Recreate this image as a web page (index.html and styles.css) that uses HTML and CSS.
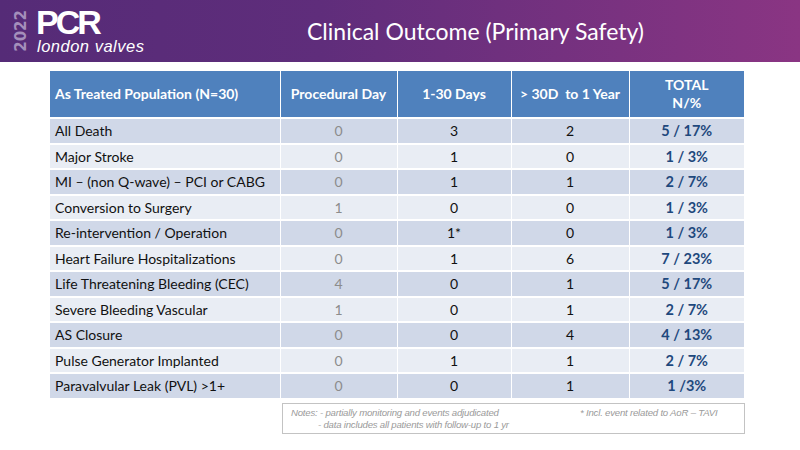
FILE: index.html
```html
<!DOCTYPE html>
<html>
<head>
<meta charset="utf-8">
<link rel="stylesheet" href="styles.css">
</head>
<body>
<header class="topbar">
  <div class="logo">
    <span class="year">2022</span>
    <div class="brand">
      <span class="pcr">PCR</span>
      <span class="lv">london valves</span>
    </div>
  </div>
  <h1 class="title">Clinical Outcome (Primary Safety)</h1>
</header>
<main class="content">
  <table class="outcomes">
    <colgroup>
      <col class="col-label">
      <col class="col-proc">
      <col class="col-30">
      <col class="col-year">
      <col class="col-total">
    </colgroup>
    <thead>
      <tr>
        <th class="c-label">As Treated Population (N=30)</th>
        <th>Procedural Day</th>
        <th>1-30 Days</th>
        <th>&gt; 30D&nbsp; to 1 Year</th>
        <th>TOTAL<br>N/%</th>
      </tr>
    </thead>
    <tbody>
      <tr><td class="c-label">All Death</td><td class="proc">0</td><td>3</td><td>2</td><td class="total">5 / 17%</td></tr>
      <tr><td class="c-label">Major Stroke</td><td class="proc">0</td><td>1</td><td>0</td><td class="total">1 / 3%</td></tr>
      <tr><td class="c-label">MI – (non Q-wave) – PCI or CABG</td><td class="proc">0</td><td>1</td><td>1</td><td class="total">2 / 7%</td></tr>
      <tr><td class="c-label">Conversion to Surgery</td><td class="proc">1</td><td>0</td><td>0</td><td class="total">1 / 3%</td></tr>
      <tr><td class="c-label">Re-intervention / Operation</td><td class="proc">0</td><td>1*</td><td>0</td><td class="total">1 / 3%</td></tr>
      <tr><td class="c-label">Heart Failure Hospitalizations</td><td class="proc">0</td><td>1</td><td>6</td><td class="total">7 / 23%</td></tr>
      <tr><td class="c-label">Life Threatening Bleeding (CEC)</td><td class="proc">4</td><td>0</td><td>1</td><td class="total">5 / 17%</td></tr>
      <tr><td class="c-label">Severe Bleeding Vascular</td><td class="proc">1</td><td>0</td><td>1</td><td class="total">2 / 7%</td></tr>
      <tr><td class="c-label">AS Closure</td><td class="proc">0</td><td>0</td><td>4</td><td class="total">4 / 13%</td></tr>
      <tr><td class="c-label">Pulse Generator Implanted</td><td class="proc">0</td><td>1</td><td>1</td><td class="total">2 / 7%</td></tr>
      <tr><td class="c-label">Paravalvular Leak (PVL) &gt;1+</td><td class="proc">0</td><td>0</td><td>1</td><td class="total">1 /3%</td></tr>
    </tbody>
  </table>
  <div class="notes">
    <div class="notes-row">
      <span class="note-a">Notes: - partially monitoring and events adjudicated</span>
      <span class="asterisk">* Incl. event related to AoR – TAVI</span>
    </div>
    <div class="notes-row indent">- data includes all patients with follow-up to 1 yr</div>
  </div>
</main>
</body>
</html>
```

FILE: styles.css
```css
html, body {
  margin: 0;
  padding: 0;
  background: #ffffff;
}
body {
  width: 800px;
  height: 450px;
  overflow: hidden;
  font-family: Lato, "Open Sans", sans-serif;
}
.topbar {
  height: 62px;
  display: flex;
  align-items: center;
  background: linear-gradient(90deg, #552b77 0%, #5f2d7b 40%, #8a3583 100%);
  box-sizing: border-box;
}
.logo {
  display: flex;
  align-items: center;
  padding-left: 13px;
  width: 294px;
  flex: none;
}
.year {
  writing-mode: vertical-rl;
  transform: rotate(180deg);
  font-family: "DejaVu Sans", sans-serif;
  font-weight: bold;
  font-size: 15px;
  color: #a48fbb;
  line-height: 17px;
  margin-right: 7px;
}
.brand {
  display: flex;
  flex-direction: column;
  color: #ffffff;
}
.pcr {
  font-family: "Liberation Sans", Arial, sans-serif;
  font-weight: bold;
  font-size: 34px;
  line-height: 30px;
  height: 30px;
  letter-spacing: -3px;
  margin-left: -1px;
}
.lv {
  font-family: "Liberation Sans", Arial, sans-serif;
  font-style: italic;
  font-size: 16.5px;
  line-height: 17px;
  letter-spacing: 0.5px;
  margin-top: 1px;
}
.title {
  margin: 0;
  font-family: Lato, "Open Sans", sans-serif;
  font-weight: normal;
  font-size: 23px;
  color: #ffffff;
}
.content {
  padding: 9px 56px 0 50px;
}
.outcomes {
  width: 694px;
  border-collapse: collapse;
  table-layout: fixed;
  font-size: 14px;
  color: #111111;
}
.col-label { width: 230px; }
.col-proc { width: 117px; }
.col-30 { width: 114px; }
.col-year { width: 118px; }
.col-total { width: 115px; }
.outcomes th {
  background: #4f81bd;
  color: #ffffff;
  font-weight: bold;
  font-size: 14px;
  height: 46px;
  padding: 0;
  border-left: 1px solid #ffffff;
  border-bottom: 2px solid #ffffff;
  line-height: 18px;
}
.outcomes th:first-child,
.outcomes td:first-child { border-left: none; }
.outcomes td {
  height: 23.5px;
  padding: 0;
  text-align: center;
  border-left: 1px solid #ffffff;
  border-top: 2px solid #ffffff;
}
.outcomes tbody tr:nth-child(odd) td { background: #d0d8e8; }
.outcomes tbody tr:nth-child(even) td { background: #e9edf4; }
.outcomes tbody tr:first-child td { border-top: none; }
.outcomes .c-label {
  text-align: left;
  padding-left: 5px;
}
.outcomes .proc { color: #8c8c8c; }
.outcomes .total {
  color: #1f497d;
  font-weight: bold;
  font-size: 14.5px;
}
.notes {
  margin: 5px 0 0 232px;
  width: 463px;
  height: 31px;
  box-sizing: border-box;
  border: 1px solid #c3c3c3;
  padding: 3px 0 0 8px;
  font-family: "Liberation Sans", Arial, sans-serif;
  font-style: italic;
  font-size: 9.6px;
  line-height: 12px;
  color: #9a9a9a;
  letter-spacing: -0.2px;
}
.notes-row {
  display: flex;
}
.note-a {
  width: 289px;
  flex: none;
}
.indent {
  padding-left: 27px;
}
```
